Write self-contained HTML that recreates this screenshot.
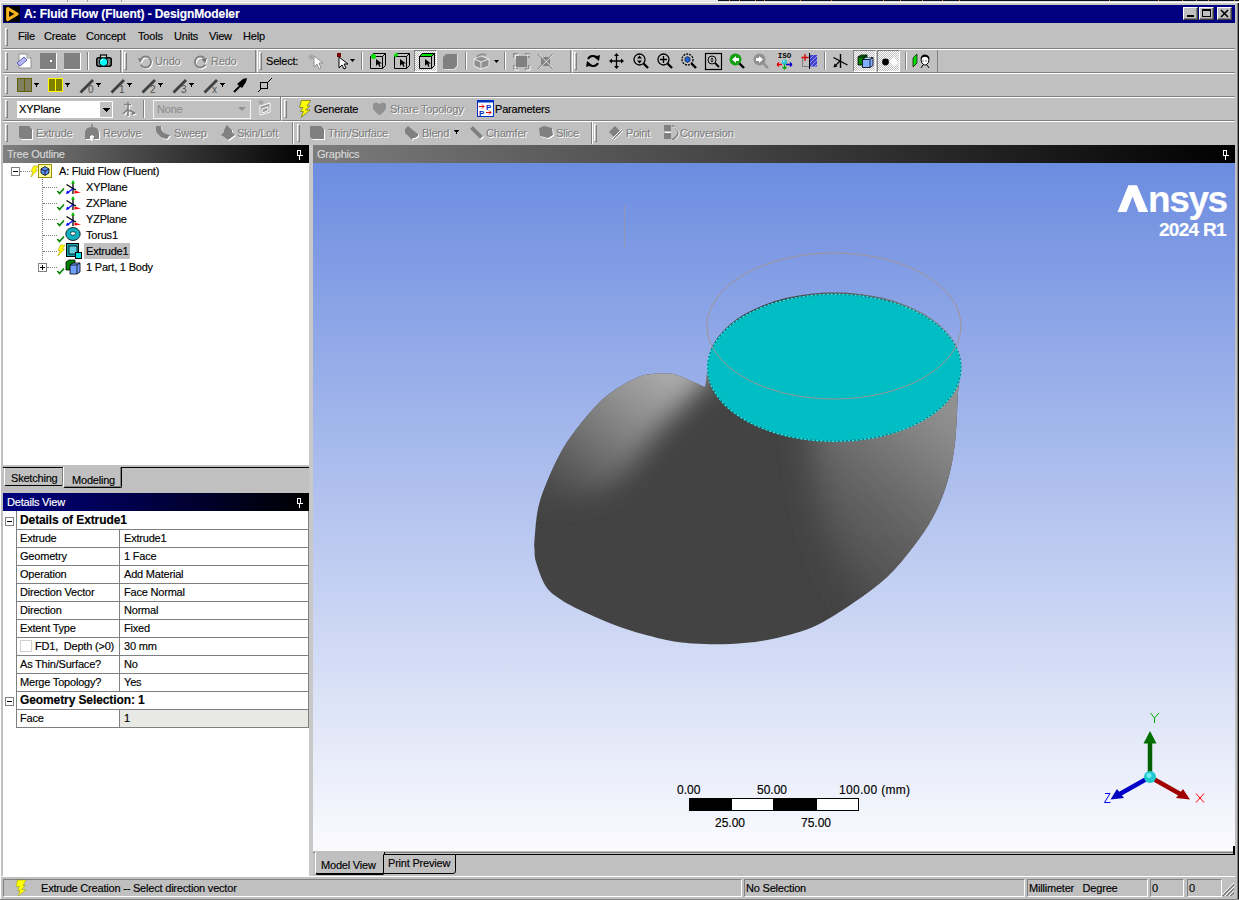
<!DOCTYPE html>
<html><head><meta charset="utf-8">
<style>
*{margin:0;padding:0;box-sizing:border-box}
html,body{width:1239px;height:900px;overflow:hidden;background:#c0c0c0}
body{position:relative;font-family:"Liberation Sans",sans-serif;font-size:11px;color:#000;letter-spacing:-0.2px;-webkit-text-stroke:0.15px currentColor}
.a{position:absolute}
.t{position:absolute;white-space:pre;line-height:13px}
.grip{position:absolute;width:3px;border-left:1px solid #fff;border-top:1px solid #fff;border-right:1px solid #808080;border-bottom:1px solid #808080}
.sep{position:absolute;width:2px;border-left:1px solid #808080;border-right:1px solid #fff}
.hl{position:absolute;height:2px;border-top:1px solid #808080;border-bottom:1px solid #fff}
.sp{position:absolute;border-top:1px solid #808080;border-left:1px solid #808080;border-right:1px solid #fff;border-bottom:1px solid #fff}
.dis{color:#808080;text-shadow:1px 1px 0 #fff}
svg{position:absolute;overflow:visible}
.tbar{position:absolute;border-left:1px solid #fff;border-right:1px solid #808080;border-bottom:1px solid #808080}
.tbar.f{border-left:none}
.tbar.nb{border-bottom:none}
.tbar.nr{border-right:none}
.pressed{background-color:#e0e0e0;background-image:repeating-conic-gradient(#fff 0 25%,#c0c0c0 0 50%);background-size:2px 2px;border-top:1px solid #808080;border-left:1px solid #808080;border-right:1px solid #fff;border-bottom:1px solid #fff}
.tb{background:#c0c0c0;border-top:1px solid #fff;border-left:1px solid #fff;border-right:1px solid #404040;border-bottom:1px solid #404040;box-shadow:inset -1px -1px 0 #808080}
</style></head><body>
<!-- top strip -->
<div class="a" style="left:0;top:0;width:1239px;height:1px;background:#ececec"></div>
<div class="a" style="left:718px;top:0;width:521px;height:1px;background:#0c1424"></div>
<div class="a" style="left:0;top:1px;width:1239px;height:1px;background:#dcdcdc"></div>
<div class="a" style="left:729px;top:0;width:1px;height:1px;background:#d09030"></div><div class="a" style="left:739px;top:0;width:1px;height:1px;background:#d09030"></div><div class="a" style="left:755px;top:0;width:1px;height:1px;background:#d09030"></div><div class="a" style="left:764px;top:0;width:1px;height:1px;background:#d09030"></div><div class="a" style="left:800px;top:0;width:1px;height:1px;background:#d09030"></div><div class="a" style="left:831px;top:0;width:1px;height:1px;background:#d09030"></div><div class="a" style="left:883px;top:0;width:1px;height:1px;background:#d09030"></div><div class="a" style="left:900px;top:0;width:1px;height:1px;background:#d09030"></div><div class="a" style="left:922px;top:0;width:1px;height:1px;background:#d09030"></div><div class="a" style="left:942px;top:0;width:1px;height:1px;background:#d09030"></div><div class="a" style="left:959px;top:0;width:1px;height:1px;background:#d09030"></div><div class="a" style="left:1109px;top:0;width:1px;height:1px;background:#d09030"></div><div class="a" style="left:1158px;top:0;width:1px;height:1px;background:#d09030"></div><div class="a" style="left:1182px;top:0;width:1px;height:1px;background:#d09030"></div><div class="a" style="left:1196px;top:0;width:1px;height:1px;background:#d09030"></div><div class="a" style="left:1208px;top:0;width:1px;height:1px;background:#d09030"></div><div class="a" style="left:1234px;top:0;width:1px;height:1px;background:#d09030"></div><div class="a" style="left:67px;top:0;width:1px;height:2px;background:#a0a0a0"></div><div class="a" style="left:87px;top:0;width:1px;height:2px;background:#a0a0a0"></div><div class="a" style="left:121px;top:0;width:1px;height:2px;background:#a0a0a0"></div>
<div class="a" style="left:0;top:2px;width:1239px;height:1px;background:#fff"></div>
<div class="a" style="left:0;top:3px;width:1239px;height:2px;background:#c8c8c4"></div>

<!-- title bar -->
<div class="a" style="left:3px;top:5px;width:1232px;height:18px;background:#000080"></div>
<div class="a" style="left:4px;top:6px;width:16px;height:16px;background:#000"></div>
<svg style="left:4px;top:6px" width="16" height="16"><path d="M3.6 2.4 L13.2 8 L3.6 13.6 Z" fill="none" stroke="#f5b21a" stroke-width="3" stroke-linejoin="round"/></svg>
<div class="t" style="left:24px;top:8px;color:#fff;font-weight:bold;font-size:12px;letter-spacing:-0.1px">A: Fluid Flow (Fluent) - DesignModeler</div>

<!-- menu -->
<div class="grip" style="left:5px;top:28px;height:18px"></div>
<div class="t" style="left:18px;top:30px">File</div>
<div class="t" style="left:44px;top:30px">Create</div>
<div class="t" style="left:86px;top:30px">Concept</div>
<div class="t" style="left:138px;top:30px">Tools</div>
<div class="t" style="left:174px;top:30px">Units</div>
<div class="t" style="left:209px;top:30px">View</div>
<div class="t" style="left:243px;top:30px">Help</div>
<div class="hl" style="left:3px;top:48px;width:1232px"></div>
<div class="hl" style="left:3px;top:72px;width:1232px"></div>
<div class="hl" style="left:3px;top:96px;width:1232px"></div>
<div class="hl" style="left:3px;top:120px;width:1232px"></div>


<!-- window borders -->
<div class="a" style="left:0;top:3px;width:1px;height:897px;background:#fff"></div>
<div class="a" style="left:1235px;top:3px;width:4px;height:897px;background:#c0c0c0"></div>
<div class="a" style="left:1237px;top:3px;width:1px;height:897px;background:#808080"></div>
<div class="a" style="left:1238px;top:3px;width:1px;height:897px;background:#101010"></div>
<!-- title buttons -->
<div class="a tb" style="left:1183px;top:7px;width:15px;height:13px"></div>
<div class="a tb" style="left:1199px;top:7px;width:15px;height:13px"></div>
<div class="a tb" style="left:1217px;top:7px;width:15px;height:13px"></div>
<div class="a" style="left:1187px;top:15px;width:7px;height:2px;background:#000"></div>
<div class="a" style="left:1202px;top:9px;width:9px;height:8px;border:1px solid #000;border-top-width:2px"></div>
<svg style="left:1217px;top:7px" width="15" height="13"><path d="M4 3 L11 10 M11 3 L4 10" stroke="#000" stroke-width="1.6"/></svg>

<!-- toolbar row 1 -->
<div class="tbar f" style="left:3px;top:50px;width:118px;height:23px"></div>
<div class="grip" style="left:5px;top:52px;height:18px"></div>
<svg style="left:16px;top:53px" width="16" height="16"><path d="M3 1 H11 L15 5 V15 H3 Z" fill="#fff" stroke="#909090"/><path d="M11 1 V5 H15" fill="#ddd" stroke="#909090"/><path d="M1 10 L8 4 L11 7 L4 13 Z" fill="#b8b8f0" stroke="#6060c0"/></svg>
<div class="a" style="left:40px;top:53px;width:17px;height:17px;background:#fff"></div>
<div class="a" style="left:40px;top:53px;width:16px;height:16px;background:#808080"></div>
<div class="a" style="left:50px;top:60px;width:2px;height:2px;background:#fff"></div>
<div class="a" style="left:64px;top:53px;width:17px;height:17px;background:#fff"></div>
<div class="a" style="left:64px;top:53px;width:16px;height:16px;background:#808080"></div>
<div class="sep" style="left:87px;top:52px;height:18px"></div>
<svg style="left:96px;top:54px" width="16" height="14"><rect x="0.75" y="3.75" width="14.5" height="8.5" rx="2" fill="#808080" stroke="#000" stroke-width="1.5"/><rect x="4.5" y="1" width="6" height="3" fill="#e0e0e0" stroke="#000" stroke-width="1.2"/><circle cx="7.5" cy="8" r="4.2" fill="#00ffff" stroke="#000" stroke-width="1"/><path d="M5 7 Q5.5 5.5 7 5.2" stroke="#fff" stroke-width="0.9" fill="none"/></svg>

<div class="tbar" style="left:122px;top:50px;width:134px;height:23px"></div>
<div class="grip" style="left:124px;top:52px;height:18px"></div>
<svg style="left:137px;top:54px" width="17" height="17"><g transform="translate(1,1)"><path d="M4.29 4.46 A5.5 5.5 0 1 1 3.74 10.75" fill="none" stroke="#fff" stroke-width="1.8"/><path d="M1 4 L6 4.5 L3 9 Z" fill="#fff"/></g><path d="M4.29 4.46 A5.5 5.5 0 1 1 3.74 10.75" fill="none" stroke="#808080" stroke-width="1.8"/><path d="M1 4 L6 4.5 L3 9 Z" fill="#808080"/></svg>
<div class="t dis" style="left:155px;top:55px">Undo</div>
<svg style="left:193px;top:54px" width="17" height="17"><g transform="translate(1,1)"><path d="M11.71 4.46 A5.5 5.5 0 1 0 12.26 10.75" fill="none" stroke="#fff" stroke-width="1.8"/><path d="M14 4 L8.5 5 L12 9.5 Z" fill="#fff"/></g><path d="M11.71 4.46 A5.5 5.5 0 1 0 12.26 10.75" fill="none" stroke="#808080" stroke-width="1.8"/><path d="M14 4 L8.5 5 L12 9.5 Z" fill="#707070"/></svg>
<div class="t dis" style="left:211px;top:55px">Redo</div>

<div class="tbar" style="left:257px;top:50px;width:314px;height:23px"></div>
<div class="grip" style="left:259px;top:52px;height:18px"></div>
<div class="t" style="left:266px;top:55px">Select:</div>
<svg style="left:308px;top:53px" width="16" height="17"><path d="M6 3 L6 14 L9 11 L11 16 L13 15 L11 10 L15 10 Z" fill="#fff" stroke="#909090"/><path d="M3 1 V7 M0 4 H6 M1 2 L5 6 M5 2 L1 6" stroke="#a0a0a0"/></svg>
<svg style="left:337px;top:53px" width="18" height="17"><rect x="0" y="0" width="4" height="4" fill="#800000"/><path d="M2 4 L2 15 L5 12 L7 16 L9 15 L7 11 L11 11 Z" fill="#fff" stroke="#000"/><path d="M13 6 H18 L15.5 9 Z" fill="#000"/></svg>
<div class="sep" style="left:361px;top:52px;height:18px"></div>
<svg style="left:370px;top:53px" width="16" height="16"><path d="M0.5 3.5 L3.5 0.5 H15.5 V12.5 L12.5 15.5 H0.5 Z M0.5 3.5 H12.5 V15.5 M12.5 3.5 L15.5 0.5" fill="#c0c0c0" stroke="#000"/><circle cx="3.5" cy="3.5" r="2.5" fill="#00e000"/><path d="M6 6 V13 L8 11 L9.5 14 L10.5 13.5 L9.5 10.5 L12 10.5 Z" fill="#000"/></svg>
<svg style="left:394px;top:53px" width="16" height="16"><path d="M0.5 3.5 L3.5 0.5 H15.5 V12.5 L12.5 15.5 H0.5 Z M0.5 3.5 H12.5 V15.5 M12.5 3.5 L15.5 0.5" fill="#c0c0c0" stroke="#000"/><path d="M0.5 3.5 L3.5 0.5" stroke="#00e000" stroke-width="2.5"/><path d="M6 6 V13 L8 11 L9.5 14 L10.5 13.5 L9.5 10.5 L12 10.5 Z" fill="#000"/></svg>
<div class="a pressed" style="left:414px;top:50px;width:23px;height:22px"></div>
<svg style="left:419px;top:53px" width="16" height="16"><path d="M0.5 3.5 L3.5 0.5 H15.5 V12.5 L12.5 15.5 H0.5 Z" fill="#c0c0c0" stroke="#000"/><path d="M0.5 3.5 L3.5 0.5 H15.5 L12.5 3.5 Z" fill="#00e000" stroke="#000"/><path d="M12.5 3.5 V15.5" stroke="#000"/><path d="M6 6 V13 L8 11 L9.5 14 L10.5 13.5 L9.5 10.5 L12 10.5 Z" fill="#000"/></svg>
<svg style="left:442px;top:53px" width="17" height="17"><path d="M1.5 4.5 L4.5 1.5 H15.5 V13.5 L12.5 16.5 H1.5 Z" fill="#fff"/><path d="M1 4 L4 1 H15 V13 L12 16 H1 Z" fill="#808080"/></svg>
<div class="sep" style="left:465px;top:52px;height:18px"></div>
<svg style="left:473px;top:53px" width="25" height="17"><path d="M1 6 L8 3 L16 6 V13 L8 16 L1 13 Z" fill="#909090" stroke="#fff" stroke-width="0.7"/><path d="M8 9 V16 M1 6 L8 9 L16 6" stroke="#fff" stroke-width="0.8" fill="none"/><path d="M4 4 A6 4 0 0 1 13 2" fill="none" stroke="#909090" stroke-width="1.8"/><path d="M21 7 H26 L23.5 10 Z" fill="#000"/></svg>
<div class="sep" style="left:504px;top:52px;height:18px"></div>
<svg style="left:513px;top:53px" width="17" height="17"><rect x="3" y="3" width="11" height="11" fill="#808080"/><path d="M1 5 V1 H5 M12 1 H16 V5 M16 12 V16 H12 M5 16 H1 V12" stroke="#808080" stroke-width="1.5" fill="none"/><path d="M2 6 V2 H6 M13 2 H17 M17 13 V17 H13 M6 17 H2 V13" stroke="#fff" fill="none"/></svg>
<svg style="left:537px;top:53px" width="17" height="17"><rect x="4" y="4" width="9" height="9" fill="#808080"/><path d="M1 1 L16 16 M16 1 L1 16" stroke="#909090" stroke-width="1.4"/><path d="M2 1 L17 16 M17 1 L2 16" stroke="#fff" stroke-width="0.6"/></svg>

<div class="tbar" style="left:572px;top:50px;width:366px;height:23px"></div>
<div class="grip" style="left:574px;top:52px;height:18px"></div>
<svg style="left:586px;top:53px" width="14" height="16"><path d="M11.5 5 A5.5 5 0 0 0 2 6" fill="none" stroke="#000" stroke-width="2"/><path d="M2.5 11 A5.5 5 0 0 0 12 10" fill="none" stroke="#000" stroke-width="2"/><path d="M8 4 L14 2 L13 8 Z M6 12 L0 14 L1 8 Z" fill="#000"/></svg>
<svg style="left:609px;top:53px" width="15" height="16"><path d="M7.5 2 V14 M1.5 8 H13.5" stroke="#000" stroke-width="1.3"/><path d="M7.5 0 L10 3 H5 Z M7.5 16 L10 13 H5 Z M0 8 L3 5.5 V10.5 Z M15 8 L12 5.5 V10.5 Z" fill="#000"/></svg>
<svg style="left:633px;top:53px" width="16" height="16"><circle cx="6.5" cy="6.5" r="5.5" fill="none" stroke="#000" stroke-width="1.3"/><path d="M10.5 10.5 L15 15" stroke="#000" stroke-width="2.4"/><path d="M6.5 2.5 L9 5.5 H4 Z M6.5 10.5 L9 7.5 H4 Z" fill="#000"/></svg>
<svg style="left:657px;top:53px" width="16" height="16"><circle cx="6.5" cy="6.5" r="5.5" fill="none" stroke="#000" stroke-width="1.3"/><path d="M10.5 10.5 L15 15" stroke="#000" stroke-width="2.4"/><path d="M6.5 3 V10 M3 6.5 H10" stroke="#000" stroke-width="1.3"/></svg>
<svg style="left:681px;top:53px" width="16" height="16"><circle cx="6.5" cy="6.5" r="5.5" fill="none" stroke="#000" stroke-width="1.3" stroke-dasharray="2 1"/><path d="M10.5 10.5 L15 15" stroke="#000" stroke-width="2.4"/><path d="M4 5 L6.5 3.5 L9 5 V8 L6.5 9.5 L4 8 Z" fill="#2060e0" stroke="#000" stroke-width="0.6"/></svg>
<svg style="left:705px;top:53px" width="17" height="17"><rect x="0.5" y="0.5" width="16" height="16" fill="none" stroke="#000" stroke-width="1.2"/><circle cx="7" cy="7" r="4" fill="none" stroke="#000"/><path d="M10 10 L14 14" stroke="#000" stroke-width="2"/><path d="M7 4.5 L8.5 6.5 H5.5 Z M7 9.5 L8.5 7.5 H5.5 Z" fill="#000"/></svg>
<svg style="left:729px;top:53px" width="16" height="16"><circle cx="6.5" cy="6.5" r="6" fill="#10a010"/><path d="M10.5 10.5 L15 15" stroke="#000" stroke-width="2.4"/><path d="M3 6.5 L7 3 V5 H10 V8 H7 V10 Z" fill="#fff"/></svg>
<svg style="left:753px;top:53px" width="16" height="16"><circle cx="6.5" cy="6.5" r="6" fill="#909090"/><path d="M10.5 10.5 L15 15" stroke="#909090" stroke-width="2.4"/><path d="M10 6.5 L6 3 V5 H3 V8 H6 V10 Z" fill="#fff"/></svg>
<svg style="left:776px;top:53px" width="17" height="17"><text x="8.5" y="5.3" font-family="Liberation Mono" font-size="7.5" font-weight="bold" text-anchor="middle" fill="#000" letter-spacing="0">ISO</text><path d="M1 11.5 H6 M10 11.5 H16" stroke="#e00000" stroke-width="1.3"/><path d="M10 11.5 H16" stroke="#0000e0" stroke-width="1.3"/><path d="M1 11.5 L3 9.5 M1 11.5 L3 13.5" stroke="#e00000" stroke-width="1.1"/><path d="M16 11.5 L14 9.5 M16 11.5 L14 13.5" stroke="#0000e0" stroke-width="1.1"/><path d="M8.5 10 V16 M6.5 14 L8.5 16 L10.5 14" stroke="#00a000" stroke-width="1.2" fill="none"/><circle cx="8.5" cy="9" r="2.6" fill="#20c0d0"/><circle cx="7.8" cy="8.3" r="1" fill="#a0f0ff"/></svg>
<svg style="left:801px;top:53px" width="17" height="17"><rect x="8" y="2" width="8" height="11.5" fill="#4040d0"/><path d="M8 7 L13 2 M8 11 L16 3 M10 13 L16 7 M14 13 L16 11" stroke="#a0a0ff" stroke-width="0.9"/><rect x="1.5" y="4.5" width="7" height="9" fill="none" stroke="#808080"/><path d="M8.5 0 V16" stroke="#000"/><path d="M4 1 V8 M0.5 4.5 H7.5" stroke="#d00000" stroke-width="1.3"/></svg>
<div class="sep" style="left:824px;top:52px;height:18px"></div>
<svg style="left:832px;top:53px" width="17" height="16"><path d="M8.5 1 V15" stroke="#000" stroke-width="1.4"/><path d="M1.5 4.5 L15.5 12" stroke="#000" stroke-width="1.4"/><path d="M8 8 L3 13" stroke="#000" stroke-width="1.2"/><path d="M1.5 14.5 L2.5 10.5 L5.5 13.5 Z" fill="#000"/></svg>
<div class="a pressed" style="left:853px;top:50px;width:23px;height:22px"></div>
<svg style="left:857px;top:54px" width="17" height="15"><path d="M1 3 L4 1 H10 V9 L7 11 H1 Z" fill="#008000" stroke="#000" stroke-width="0.8"/><path d="M1 3 H7 V11 M7 3 L10 1" stroke="#000" stroke-width="0.8" fill="none"/><path d="M5.5 5.5 L8.5 3.5 H16 V11.5 L13 13.5 H5.5 Z" fill="#80b0ff" stroke="#000" stroke-width="0.8"/><path d="M5.5 5.5 H13 V13.5 M13 5.5 L16 3.5" stroke="#000" stroke-width="0.8" fill="none"/><path d="M7 5 L10 3.5 H14.5 L12 5 Z" fill="#c0d8ff"/></svg>
<div class="a pressed" style="left:877px;top:50px;width:23px;height:22px"></div>
<svg style="left:881px;top:54px" width="18" height="15"><circle cx="4.5" cy="8" r="3.4" fill="#000"/><path d="M13 3.5 L17.5 8 L13 12.5 L8.5 8 Z" fill="#fff"/></svg>
<div class="sep" style="left:905px;top:52px;height:18px"></div>
<svg style="left:912px;top:53px" width="19" height="16"><path d="M1 5 L5 1 V10 L1 14 Z" fill="#00e000" stroke="#000" stroke-width="0.7"/><path d="M9 7 Q9 3 13 2.5 Q17 3 17 7 Q17 10 14 12 H12 Q9 10 9 7 Z" fill="#fff" stroke="#000"/><path d="M8.5 6 Q9 1.5 13 1.5 Q17.5 2 17.5 6 L16 5 Q14 3 11 4 Z" fill="#000"/><path d="M10.5 8 H11.5 M13.5 8 H14.5" stroke="#000"/><path d="M9 15 L11 12 M17 15 L15 12" stroke="#000"/></svg>

<!-- toolbar row 2 -->
<div class="grip" style="left:5px;top:76px;height:18px"></div>
<svg style="left:17px;top:78px" width="16" height="14"><rect x="0.5" y="0.5" width="14" height="13" fill="#808060" stroke="#606000"/><path d="M7.5 0.5 V13.5" stroke="#606000"/></svg>
<svg style="left:34px;top:83px" width="6" height="5"><path d="M0 0 H5 V1 H4 V2 H3 V4 H2 V2 H1 V1 H0 Z" fill="#000"/></svg>
<svg style="left:48px;top:78px" width="16" height="14"><rect x="0.5" y="0.5" width="14" height="13" fill="#808000" stroke="#ffff00"/><path d="M7.5 0.5 V13.5" stroke="#ffff00"/></svg>
<svg style="left:65px;top:83px" width="6" height="5"><path d="M0 0 H5 V1 H4 V2 H3 V4 H2 V2 H1 V1 H0 Z" fill="#000"/></svg>
<svg style="left:79px;top:78px" width="16" height="16"><path d="M1.5 14.5 L14 2" stroke="#404040" stroke-width="2.8"/><text x="9" y="15" font-family="Liberation Sans" font-size="10" fill="#505050" letter-spacing="0">0</text></svg>
<svg style="left:96px;top:83px" width="6" height="5"><path d="M0 0 H5 V1 H4 V2 H3 V4 H2 V2 H1 V1 H0 Z" fill="#000"/></svg>
<svg style="left:110px;top:78px" width="16" height="16"><path d="M1.5 14.5 L14 2" stroke="#404040" stroke-width="2.8"/><text x="9" y="15" font-family="Liberation Sans" font-size="10" fill="#505050" letter-spacing="0">1</text></svg>
<svg style="left:127px;top:83px" width="6" height="5"><path d="M0 0 H5 V1 H4 V2 H3 V4 H2 V2 H1 V1 H0 Z" fill="#000"/></svg>
<svg style="left:141px;top:78px" width="16" height="16"><path d="M1.5 14.5 L14 2" stroke="#404040" stroke-width="2.8"/><text x="9" y="15" font-family="Liberation Sans" font-size="10" fill="#505050" letter-spacing="0">2</text></svg>
<svg style="left:158px;top:83px" width="6" height="5"><path d="M0 0 H5 V1 H4 V2 H3 V4 H2 V2 H1 V1 H0 Z" fill="#000"/></svg>
<svg style="left:172px;top:78px" width="16" height="16"><path d="M1.5 14.5 L14 2" stroke="#404040" stroke-width="2.8"/><text x="9" y="15" font-family="Liberation Sans" font-size="10" fill="#505050" letter-spacing="0">3</text></svg>
<svg style="left:189px;top:83px" width="6" height="5"><path d="M0 0 H5 V1 H4 V2 H3 V4 H2 V2 H1 V1 H0 Z" fill="#000"/></svg>
<svg style="left:203px;top:78px" width="16" height="16"><path d="M1.5 14.5 L14 2" stroke="#404040" stroke-width="2.8"/><text x="9" y="15" font-family="Liberation Sans" font-size="10" fill="#505050" letter-spacing="0">x</text></svg>
<svg style="left:220px;top:83px" width="6" height="5"><path d="M0 0 H5 V1 H4 V2 H3 V4 H2 V2 H1 V1 H0 Z" fill="#000"/></svg>
<svg style="left:233px;top:77px" width="16" height="16"><path d="M1 15 L8 8" stroke="#000" stroke-width="2"/><path d="M4 7 L10 2 L14 1 L13 5 L9 11 Z" fill="#000"/></svg>
<svg style="left:258px;top:77px" width="15" height="15"><rect x="2.5" y="5.5" width="7" height="6" fill="none" stroke="#000"/><path d="M0 15 L3 12 M9 6 L14 1" stroke="#000"/></svg>
<div class="a" style="left:280px;top:97px;width:1px;height:23px;background:#808080"></div>

<!-- toolbar row 3 -->
<div class="tbar f" style="left:3px;top:98px;width:278px;height:23px"></div>
<div class="grip" style="left:5px;top:100px;height:18px"></div>
<div class="a" style="left:17px;top:101px;width:96px;height:17px;background:#fff"></div>
<div class="a" style="left:100px;top:102px;width:12px;height:15px;background:#c0c0c0"></div>
<svg style="left:103px;top:108px" width="8" height="5"><path d="M0 0 H7 V1 H6 V2 H5 V3 H4 V4 H3 V3 H2 V2 H1 V1 H0 Z" fill="#000"/></svg>
<div class="t" style="left:19px;top:103px">XYPlane</div>
<svg style="left:121px;top:101px" width="17" height="17"><g transform="translate(1,1)"><path d="M3 3.5 H10 M7 1 V15 M7 8 L2 13 M7 9 L14 12" stroke="#fff" stroke-width="1.6" fill="none"/><path d="M11 10 L15 12.5 L11 14 Z" fill="#fff"/></g><path d="M3 3.5 H10 M7 1 V15 M7 8 L2 13 M7 9 L14 12" stroke="#808080" stroke-width="1.6" fill="none"/><path d="M11 10 L15 12.5 L11 14 Z" fill="#808080"/></svg>
<div class="sep" style="left:143px;top:100px;height:18px"></div>
<div class="a" style="left:153px;top:100px;width:98px;height:19px;border:1px solid #f4f4f4"></div>
<div class="t" style="left:157px;top:103px;color:#909090">None</div>
<svg style="left:238px;top:107px" width="9" height="5"><path d="M0 0 H8 L4 4 Z" fill="#909090"/></svg>
<svg style="left:257px;top:100px" width="16" height="17"><path d="M3 6 L13 3 V12 L3 15 Z" fill="#a0a0a0" stroke="#fff"/><path d="M5 9 L11 7 V11 L5 13 Z" fill="none" stroke="#fff"/><path d="M4 0 V5 M1.5 2.5 H6.5 M2 1 L6 4 M6 1 L2 4" stroke="#a0a0a0"/></svg>
<div class="tbar nr" style="left:281px;top:98px;width:954px;height:23px"></div>
<div class="grip" style="left:284px;top:100px;height:18px"></div>
<svg style="left:298px;top:100px" width="14" height="18"><path d="M3.5 0.5 H12.5 L9 6 H12 L7.5 10 H12 L3 17.5 L5.5 11.5 H2.5 L5 7.5 H1.5 Z" fill="#ffff00" stroke="#606000" stroke-width="0.6"/></svg>
<div class="t" style="left:314px;top:103px">Generate</div>
<svg style="left:372px;top:101px" width="15" height="15"><path d="M1 3 Q4 0 7.5 3 Q11 0 14 3 V8 Q10 13 7.5 14 Q5 13 1 8 Z" fill="#909090"/></svg>
<div class="t dis" style="left:390px;top:103px">Share Topology</div>
<svg style="left:477px;top:100px" width="17" height="17"><rect x="0.5" y="0.5" width="16" height="16" fill="#fff" stroke="#0030c0"/><rect x="0" y="0" width="17" height="2.5" fill="#0030c0"/><text x="9" y="9.5" font-family="Liberation Sans" font-size="8" font-weight="bold" fill="#0030c0" letter-spacing="0" style="-webkit-text-stroke:0">P</text><text x="2" y="15.5" font-family="Liberation Sans" font-size="8" font-weight="bold" fill="#0030c0" letter-spacing="0" style="-webkit-text-stroke:0">P</text><path d="M2 6.5 H7 M5 4.5 L7 6.5 L5 8.5 M9 12.5 H14 M12 10.5 L14 12.5 L12 14.5" stroke="#e00000" stroke-width="1" fill="none"/></svg>
<div class="t" style="left:495px;top:103px">Parameters</div>

<!-- toolbar row 4 -->
<div class="tbar f nb" style="left:3px;top:122px;width:290px;height:22px"></div>
<div class="grip" style="left:5px;top:124px;height:18px"></div>
<svg style="left:18px;top:124px" width="17" height="17"><path d="M1 2 H11 L14 5 V15 H3 L1 13 Z" fill="#fff" transform="translate(1,1)"/><path d="M1 2 H11 L14 5 V15 H3 L1 13 Z" fill="#808080"/></svg>
<div class="t dis" style="left:36px;top:127px">Extrude</div>
<svg style="left:84px;top:124px" width="17" height="17"><path d="M1 15 V9 Q1 3 8 3 Q15 3 15 9 V15 H10 V12 H6 V15 Z" fill="#fff" transform="translate(1,1)"/><path d="M1 15 V9 Q1 3 8 3 Q15 3 15 9 V15 H10 V12 H6 V15 Z" fill="#808080"/><path d="M8 0 V3" stroke="#808080" stroke-width="1.5"/><path d="M8 11 V17" stroke="#fff" stroke-width="1.5"/></svg>
<div class="t dis" style="left:103px;top:127px">Revolve</div>
<svg style="left:155px;top:124px" width="17" height="17"><path d="M1 2 H6 Q6 8 11 10 L15 11 L12 15 Q4 14 1 7 Z" fill="#fff" transform="translate(1,1)"/><path d="M1 2 H6 Q6 8 11 10 L15 11 L12 15 Q4 14 1 7 Z" fill="#808080"/></svg>
<div class="t dis" style="left:174px;top:127px">Sweep</div>
<svg style="left:220px;top:124px" width="17" height="17"><path d="M7 1 L12 6 V8 L15 11 L8 16 L1 11 L4 8 V6 Z" fill="#fff" transform="translate(1,1)"/><path d="M7 1 L12 6 V8 L15 11 L8 16 L1 11 L4 8 V6 Z" fill="#808080"/></svg>
<div class="t dis" style="left:237px;top:127px">Skin/Loft</div>
<div class="tbar nb" style="left:293px;top:122px;width:299px;height:22px"></div>
<div class="grip" style="left:297px;top:124px;height:18px"></div>
<svg style="left:309px;top:124px" width="17" height="17"><path d="M1 2 H12 L15 5 V15 H3 L1 13 Z" fill="#fff" transform="translate(1,1)"/><path d="M1 2 H12 L15 5 V15 H3 L1 13 Z" fill="#808080"/></svg>
<div class="t dis" style="left:328px;top:127px">Thin/Surface</div>
<svg style="left:404px;top:124px" width="17" height="17"><path d="M1 5 L4 2 L14 10 V12 L11 14 L9 14 L8 16 L6 14 L1 9 Z" fill="#fff" transform="translate(1,1)"/><path d="M1 5 L4 2 L14 10 V12 L11 14 L9 14 L8 16 L6 14 L1 9 Z" fill="#808080"/></svg>
<div class="t dis" style="left:422px;top:127px">Blend</div>
<svg style="left:454px;top:130px" width="6" height="5"><path d="M0 0 H5 V1 H4 V2 H3 V4 H2 V2 H1 V1 H0 Z" fill="#000"/></svg>
<svg style="left:469px;top:124px" width="17" height="17"><path d="M1 5 L4 2 L14 12 L11 15 Z" fill="#fff" transform="translate(1,1)"/><path d="M1 5 L4 2 L14 12 L11 15 Z" fill="#808080"/></svg>
<div class="t dis" style="left:486px;top:127px">Chamfer</div>
<svg style="left:538px;top:124px" width="17" height="17"><path d="M1 4 L6 2 L14 4 L15 11 L10 14 L2 12 Z" fill="#fff" transform="translate(1,1)"/><path d="M1 4 L6 2 L14 4 L15 11 L10 14 L2 12 Z" fill="#808080"/></svg>
<div class="t dis" style="left:556px;top:127px">Slice</div>
<div class="tbar nb nr" style="left:592px;top:122px;width:643px;height:22px"></div>
<div class="grip" style="left:594px;top:124px;height:18px"></div>
<svg style="left:608px;top:124px" width="17" height="17"><path d="M1 8 L7 2 L13 8 L7 14 Z" fill="#808080"/><path d="M4 15 L14 5 M6 16 L15 7" stroke="#fff" stroke-width="1"/><path d="M5 15.5 L14.5 6" stroke="#808080" stroke-width="1"/></svg>
<div class="t dis" style="left:626px;top:127px">Point</div>
<svg style="left:663px;top:124px" width="16" height="17"><rect x="1" y="1" width="7" height="6" fill="#808080"/><rect x="1" y="9" width="7" height="6" fill="#808080"/><rect x="2" y="8" width="6" height="1" fill="#fff"/><path d="M9 2 H11 L15 7 V10 L11 15 H9" fill="none" stroke="#808080" stroke-width="1.5"/><path d="M10 3 H12 L16 8 V11 L12 16" fill="none" stroke="#fff" stroke-width="0.8"/></svg>
<div class="t dis" style="left:680px;top:127px">Conversion</div>

<!-- TREE OUTLINE -->
<div class="a" style="left:3px;top:145px;width:306px;height:18px;background:linear-gradient(to right,#808080,#000)"></div>
<div class="t" style="left:7px;top:148px;color:#d8d8d8">Tree Outline</div>
<svg style="left:297px;top:150px" width="6" height="10"><path d="M0.5 0.5 H3.5 V5.5 H0.5 Z M3.5 5.5 H6 M2.5 6 V9.5" fill="none" stroke="#fff" shape-rendering="crispEdges"/></svg>
<div class="a" style="left:3px;top:163px;width:306px;height:302px;background:#fff"></div>
<div class="a" style="left:11px;top:167px;width:9px;height:9px;border:1px solid #808080;background:#fff"></div>
<div class="a" style="left:13px;top:171px;width:5px;height:1px;background:#000"></div>
<div class="a" style="left:20px;top:171px;width:10px;border-top:1px dotted #808080"></div>
<div class="a" style="left:42px;top:179px;height:81px;border-left:1px dotted #808080"></div>
<div class="t" style="left:59px;top:165px">A: Fluid Flow (Fluent)</div>
<div class="a" style="left:43px;top:187px;width:14px;border-top:1px dotted #808080"></div>
<div class="t" style="left:86px;top:181px">XYPlane</div>
<div class="a" style="left:43px;top:203px;width:14px;border-top:1px dotted #808080"></div>
<div class="t" style="left:86px;top:197px">ZXPlane</div>
<div class="a" style="left:43px;top:219px;width:14px;border-top:1px dotted #808080"></div>
<div class="t" style="left:86px;top:213px">YZPlane</div>
<div class="a" style="left:43px;top:235px;width:14px;border-top:1px dotted #808080"></div>
<div class="t" style="left:86px;top:229px">Torus1</div>
<div class="a" style="left:43px;top:251px;width:14px;border-top:1px dotted #808080"></div>
<div class="a" style="left:84px;top:243px;width:46px;height:16px;background:#c0c0c0"></div>
<div class="t" style="left:86px;top:245px">Extrude1</div>
<div class="a" style="left:43px;top:267px;width:14px;border-top:1px dotted #808080"></div>
<div class="t" style="left:86px;top:261px">1 Part, 1 Body</div>
<svg style="left:30px;top:166px" width="8" height="11"><path d="M3.5 0 H8 L5.5 4 H7.5 L1 11 L3 5.5 H1 Z" fill="#ffff00" stroke="#a09000" stroke-width="0.5"/></svg>
<svg style="left:38px;top:163px" width="15" height="15"><rect x="0.5" y="1.5" width="13" height="13" fill="#ffffa0" stroke="#a09000"/><path d="M3 6 L7 3.5 L11 6 V10 L7 12.5 L3 10 Z" fill="#6090ff" stroke="#000" stroke-width="0.8"/><path d="M7 8 V12 M3 6 L7 8 L11 6" stroke="#000" stroke-width="0.8" fill="none"/></svg>
<svg style="left:57px;top:188px" width="8" height="7"><path d="M0.5 3 L2.5 5.5 L7 0.5" fill="none" stroke="#008000" stroke-width="1.6"/></svg>
<svg style="left:66px;top:180px" width="16" height="16"><path d="M7 2.5 V14" stroke="#000" stroke-width="1.3"/><path d="M0.5 4.5 L7 8.5 L10 10" stroke="#000" stroke-width="1.3"/><path d="M7 8.5 L2.5 12" stroke="#0000ff" stroke-width="1.2"/><path d="M0 14 L1 10.5 L3.8 13 Z" fill="#0000ff"/><path d="M8.5 10.5 L15 12.5 L8.5 13.5 Z" fill="#ff0000"/><path d="M5 3.5 L7 0 L9 3.5 Z" fill="#00c000"/></svg>
<svg style="left:57px;top:204px" width="8" height="7"><path d="M0.5 3 L2.5 5.5 L7 0.5" fill="none" stroke="#008000" stroke-width="1.6"/></svg>
<svg style="left:66px;top:196px" width="16" height="16"><path d="M7 2.5 V14" stroke="#000" stroke-width="1.3"/><path d="M0.5 4.5 L7 8.5 L10 10" stroke="#000" stroke-width="1.3"/><path d="M7 8.5 L2.5 12" stroke="#0000ff" stroke-width="1.2"/><path d="M0 14 L1 10.5 L3.8 13 Z" fill="#0000ff"/><path d="M8.5 10.5 L15 12.5 L8.5 13.5 Z" fill="#ff0000"/><path d="M5 3.5 L7 0 L9 3.5 Z" fill="#00c000"/></svg>
<svg style="left:57px;top:220px" width="8" height="7"><path d="M0.5 3 L2.5 5.5 L7 0.5" fill="none" stroke="#008000" stroke-width="1.6"/></svg>
<svg style="left:66px;top:212px" width="16" height="16"><path d="M7 2.5 V14" stroke="#000" stroke-width="1.3"/><path d="M0.5 4.5 L7 8.5 L10 10" stroke="#000" stroke-width="1.3"/><path d="M7 8.5 L2.5 12" stroke="#0000ff" stroke-width="1.2"/><path d="M0 14 L1 10.5 L3.8 13 Z" fill="#0000ff"/><path d="M8.5 10.5 L15 12.5 L8.5 13.5 Z" fill="#ff0000"/><path d="M5 3.5 L7 0 L9 3.5 Z" fill="#00c000"/></svg>
<svg style="left:57px;top:236px" width="8" height="7"><path d="M0.5 3 L2.5 5.5 L7 0.5" fill="none" stroke="#008000" stroke-width="1.6"/></svg>
<svg style="left:65px;top:227px" width="16" height="14"><ellipse cx="8" cy="7" rx="7.2" ry="6.5" fill="#10b0c0" stroke="#000" stroke-width="0.8"/><ellipse cx="8" cy="6.5" rx="2.5" ry="1.8" fill="#fff" stroke="#000" stroke-width="0.6"/></svg>
<svg style="left:57px;top:245px" width="8" height="11"><path d="M3.5 0 H8 L5.5 4 H7.5 L1 11 L3 5.5 H1 Z" fill="#ffff00" stroke="#a09000" stroke-width="0.5"/></svg>
<svg style="left:66px;top:243px" width="16" height="16"><rect x="0.5" y="0.5" width="12" height="13" fill="#10a0b0" stroke="#000"/><rect x="3" y="3" width="8" height="8" fill="#60d0e0" stroke="#000" stroke-width="0.8"/><rect x="9.5" y="9.5" width="6" height="6" fill="#00e0e0" stroke="#000"/></svg>
<div class="a" style="left:38px;top:263px;width:9px;height:9px;border:1px solid #808080;background:#fff"></div><div class="a" style="left:40px;top:267px;width:5px;height:1px;background:#000"></div><div class="a" style="left:42px;top:265px;width:1px;height:5px;background:#000"></div>
<div class="a" style="left:47px;top:267px;width:10px;border-top:1px dotted #808080"></div>
<svg style="left:57px;top:268px" width="8" height="7"><path d="M0.5 3 L2.5 5.5 L7 0.5" fill="none" stroke="#008000" stroke-width="1.6"/></svg>
<svg style="left:65px;top:259px" width="16" height="16"><path d="M1 3 L4 1 H10 V9 L7 11 H1 Z" fill="#008000" stroke="#000" stroke-width="0.8"/><path d="M5 6 L8 4 H15 V13 L12 15 H5 Z" fill="#70a0ff" stroke="#000" stroke-width="0.8"/><path d="M5 6 H12 V15 M12 6 L15 4" stroke="#000" stroke-width="0.8" fill="none"/></svg>

<!-- tabs -->
<div class="a" style="left:3px;top:465px;width:306px;height:28px;background:#c0c0c0"></div>
<div class="a" style="left:3px;top:467px;width:60px;height:1px;background:#000"></div><div class="a" style="left:121px;top:467px;width:188px;height:1px;background:#000"></div>

<div class="a" style="left:4px;top:468px;width:59px;height:18px;background:#c0c0c0;border-left:1px solid #fff;border-bottom:1px solid #000;border-right:1px solid #808080;border-radius:0 0 2px 2px"></div>
<div class="t" style="left:11px;top:472px">Sketching</div>
<div class="a" style="left:63px;top:467px;width:59px;height:21px;background:#c0c0c0;border-left:1px solid #fff;border-bottom:1px solid #000;border-right:1px solid #000;border-radius:0 0 2px 2px;box-shadow:inset -1px -1px 0 #808080"></div>
<div class="t" style="left:72px;top:474px">Modeling</div>

<!-- DETAILS VIEW -->
<div class="a" style="left:3px;top:493px;width:306px;height:18px;background:linear-gradient(to right,#000080,#000)"></div>
<div class="t" style="left:7px;top:496px;color:#fff">Details View</div>
<svg style="left:297px;top:498px" width="6" height="10"><path d="M0.5 0.5 H3.5 V5.5 H0.5 Z M3.5 5.5 H6 M2.5 6 V9.5" fill="none" stroke="#fff" shape-rendering="crispEdges"/></svg>
<div class="a" style="left:3px;top:511px;width:306px;height:366px;background:#fff"></div>
<div class="a" style="left:120px;top:709px;width:188px;height:18px;background:#e8e8e4"></div>
<div class="a" style="left:16px;top:511px;width:1px;height:216px;background:#808080"></div>
<div class="a" style="left:308px;top:511px;width:1px;height:216px;background:#808080"></div>
<div class="a" style="left:16px;top:529px;width:293px;height:1px;background:#808080"></div>
<div class="a" style="left:5px;top:517px;width:9px;height:9px;border:1px solid #808080;background:#fff"></div><div class="a" style="left:7px;top:521px;width:5px;height:1px;background:#000"></div>
<div class="t" style="left:20px;top:514px;font-weight:bold;font-size:12px;letter-spacing:-0.1px">Details of Extrude1</div>
<div class="a" style="left:16px;top:547px;width:293px;height:1px;background:#808080"></div>
<div class="a" style="left:119px;top:529px;width:1px;height:18px;background:#808080"></div>
<div class="t" style="left:20px;top:532px">Extrude</div>
<div class="t" style="left:124px;top:532px">Extrude1</div>
<div class="a" style="left:16px;top:565px;width:293px;height:1px;background:#808080"></div>
<div class="a" style="left:119px;top:547px;width:1px;height:18px;background:#808080"></div>
<div class="t" style="left:20px;top:550px">Geometry</div>
<div class="t" style="left:124px;top:550px">1 Face</div>
<div class="a" style="left:16px;top:583px;width:293px;height:1px;background:#808080"></div>
<div class="a" style="left:119px;top:565px;width:1px;height:18px;background:#808080"></div>
<div class="t" style="left:20px;top:568px">Operation</div>
<div class="t" style="left:124px;top:568px">Add Material</div>
<div class="a" style="left:16px;top:601px;width:293px;height:1px;background:#808080"></div>
<div class="a" style="left:119px;top:583px;width:1px;height:18px;background:#808080"></div>
<div class="t" style="left:20px;top:586px">Direction Vector</div>
<div class="t" style="left:124px;top:586px">Face Normal</div>
<div class="a" style="left:16px;top:619px;width:293px;height:1px;background:#808080"></div>
<div class="a" style="left:119px;top:601px;width:1px;height:18px;background:#808080"></div>
<div class="t" style="left:20px;top:604px">Direction</div>
<div class="t" style="left:124px;top:604px">Normal</div>
<div class="a" style="left:16px;top:637px;width:293px;height:1px;background:#808080"></div>
<div class="a" style="left:119px;top:619px;width:1px;height:18px;background:#808080"></div>
<div class="t" style="left:20px;top:622px">Extent Type</div>
<div class="t" style="left:124px;top:622px">Fixed</div>
<div class="a" style="left:16px;top:655px;width:293px;height:1px;background:#808080"></div>
<div class="a" style="left:119px;top:637px;width:1px;height:18px;background:#808080"></div>
<div class="a" style="left:20px;top:640px;width:12px;height:12px;border:1px solid #d0d0d0;background:#fff"></div>
<div class="t" style="left:35px;top:640px">FD1,  Depth (&gt;0)</div>
<div class="t" style="left:124px;top:640px">30 mm</div>
<div class="a" style="left:16px;top:673px;width:293px;height:1px;background:#808080"></div>
<div class="a" style="left:119px;top:655px;width:1px;height:18px;background:#808080"></div>
<div class="t" style="left:20px;top:658px">As Thin/Surface?</div>
<div class="t" style="left:124px;top:658px">No</div>
<div class="a" style="left:16px;top:691px;width:293px;height:1px;background:#808080"></div>
<div class="a" style="left:119px;top:673px;width:1px;height:18px;background:#808080"></div>
<div class="t" style="left:20px;top:676px">Merge Topology?</div>
<div class="t" style="left:124px;top:676px">Yes</div>
<div class="a" style="left:16px;top:709px;width:293px;height:1px;background:#808080"></div>
<div class="a" style="left:5px;top:697px;width:9px;height:9px;border:1px solid #808080;background:#fff"></div><div class="a" style="left:7px;top:701px;width:5px;height:1px;background:#000"></div>
<div class="t" style="left:20px;top:694px;font-weight:bold;font-size:12px;letter-spacing:-0.1px">Geometry Selection: 1</div>
<div class="a" style="left:16px;top:727px;width:293px;height:1px;background:#808080"></div>
<div class="a" style="left:119px;top:709px;width:1px;height:18px;background:#808080"></div>
<div class="t" style="left:20px;top:712px">Face</div>
<div class="t" style="left:124px;top:712px">1</div>

<div class="a" style="left:309px;top:145px;width:4px;height:732px;background:#c8c8c8"></div>

<!-- GRAPHICS -->
<div class="a" style="left:313px;top:145px;width:922px;height:18px;background:linear-gradient(to right,#7c7c7c,#000)"></div>
<div class="t" style="left:317px;top:148px;color:#d8d8d8">Graphics</div>
<svg style="left:1223px;top:150px" width="6" height="10"><path d="M0.5 0.5 H3.5 V5.5 H0.5 Z M3.5 5.5 H6 M2.5 6 V9.5" fill="none" stroke="#fff" shape-rendering="crispEdges"/></svg>
<div class="a" style="left:313px;top:163px;width:922px;height:688px;background:linear-gradient(to bottom,#6c8ce0 0%,#fbfbfe 100%)"></div>
<div class="a" style="left:313px;top:851px;width:922px;height:26px;background:#c0c0c0"></div>
<div class="a" style="left:313px;top:852px;width:921px;height:1px;background:#808080"></div>
<div class="a" style="left:384px;top:854px;width:850px;height:1px;background:#000"></div>
<div class="a" style="left:1233px;top:846px;width:2px;height:9px;background:#000"></div>
<div class="a" style="left:315px;top:852px;width:70px;height:23px;background:#c0c0c0;border-left:1px solid #fff;border-bottom:2px solid #000;border-right:1px solid #000;border-radius:0 0 3px 3px"></div>
<div class="t" style="left:321px;top:859px">Model View</div>
<div class="a" style="left:383px;top:854px;width:73px;height:20px;background:#c0c0c0;border:1px solid #000;border-radius:0 0 3px 0"></div>
<div class="t" style="left:388px;top:857px">Print Preview</div>


<!-- 3D model -->
<svg style="left:313px;top:163px" width="921" height="688" viewBox="313 163 921 688">
<defs>
<clipPath id="bc"><path d="M707.6 366 L706.5 378 L705 387 C702.2 385.8 693.5 381.7 688 379.5 C682.5 377.3 677.7 374.8 672 373.8 C666.3 372.9 660.0 373.1 654 373.8 C648.0 374.5 643.5 374.6 636 378 C628.5 381.4 617.2 387.7 609 394 C600.8 400.3 594.5 407.2 587 416 C579.5 424.8 570.7 436.0 564 447 C557.3 458.0 551.3 471.7 547 482 C542.7 492.3 540.1 499.3 538 509 C535.9 518.7 535.1 533.3 534.5 540 C533.9 546.7 534.2 545.3 534.5 549 C534.8 552.7 534.2 556.0 536 562 C537.8 568.0 541.5 579.2 545 585 C548.5 590.8 551.2 592.8 557 597 C562.8 601.2 569.5 605.0 580 610 C590.5 615.0 606.3 622.2 620 627 C633.7 631.8 649.8 636.2 662 639 C674.2 641.8 681.7 642.7 693 643.5 C704.3 644.3 717.7 644.6 730 644 C742.3 643.4 753.2 642.8 767 640 C780.8 637.2 798.7 633.2 813 627 C827.3 620.8 840.7 611.3 853 603 C865.3 594.7 877.0 586.3 887 577 C897.0 567.7 905.3 557.0 913 547 C920.7 537.0 927.3 527.7 933 517 C938.7 506.3 943.3 495.3 947 483 C950.7 470.7 953.2 458.0 955 443 C956.8 428.0 957.2 404.0 958 393 C958.8 382.0 959.5 381.5 960 377 C960.5 372.5 960.8 367.8 961 366 A126.7 73.5 0 0 0 707.6 366 Z"/></clipPath>
<filter id="bl1" x="-50%" y="-50%" width="200%" height="200%"><feGaussianBlur stdDeviation="13"/></filter>
<filter id="bl2" x="-50%" y="-50%" width="200%" height="200%"><feGaussianBlur stdDeviation="16"/></filter>
<filter id="bl3" x="-50%" y="-50%" width="200%" height="200%"><feGaussianBlur stdDeviation="5"/></filter>
<linearGradient id="lg1" gradientUnits="userSpaceOnUse" x1="672" y1="372" x2="565" y2="500"><stop offset="0" stop-color="#adadad"/><stop offset="0.35" stop-color="#8e8e8e"/><stop offset="1" stop-color="#4a4a4a"/></linearGradient>
<linearGradient id="lg2" gradientUnits="userSpaceOnUse" x1="955" y1="420" x2="815" y2="590"><stop offset="0" stop-color="#919191"/><stop offset="0.45" stop-color="#686868"/><stop offset="1" stop-color="#444"/></linearGradient>
</defs>
<line x1="624.5" y1="205" x2="624.5" y2="247" stroke="#9098b0" stroke-width="1"/>
<path d="M707.6 366 L706.5 378 L705 387 C702.2 385.8 693.5 381.7 688 379.5 C682.5 377.3 677.7 374.8 672 373.8 C666.3 372.9 660.0 373.1 654 373.8 C648.0 374.5 643.5 374.6 636 378 C628.5 381.4 617.2 387.7 609 394 C600.8 400.3 594.5 407.2 587 416 C579.5 424.8 570.7 436.0 564 447 C557.3 458.0 551.3 471.7 547 482 C542.7 492.3 540.1 499.3 538 509 C535.9 518.7 535.1 533.3 534.5 540 C533.9 546.7 534.2 545.3 534.5 549 C534.8 552.7 534.2 556.0 536 562 C537.8 568.0 541.5 579.2 545 585 C548.5 590.8 551.2 592.8 557 597 C562.8 601.2 569.5 605.0 580 610 C590.5 615.0 606.3 622.2 620 627 C633.7 631.8 649.8 636.2 662 639 C674.2 641.8 681.7 642.7 693 643.5 C704.3 644.3 717.7 644.6 730 644 C742.3 643.4 753.2 642.8 767 640 C780.8 637.2 798.7 633.2 813 627 C827.3 620.8 840.7 611.3 853 603 C865.3 594.7 877.0 586.3 887 577 C897.0 567.7 905.3 557.0 913 547 C920.7 537.0 927.3 527.7 933 517 C938.7 506.3 943.3 495.3 947 483 C950.7 470.7 953.2 458.0 955 443 C956.8 428.0 957.2 404.0 958 393 C958.8 382.0 959.5 381.5 960 377 C960.5 372.5 960.8 367.8 961 366 A126.7 73.5 0 0 0 707.6 366 Z" fill="#434343"/>
<g clip-path="url(#bc)">
<path d="M712 380 L700 330 L600 330 L500 450 L500 502 L538 497 C555 503 588 500 610 486 C630 472 640 454 652 438 C666 420 684 406 698 388 Z" fill="url(#lg1)" filter="url(#bl1)"/>
<path d="M810 430 L813 300 L1000 300 L1000 520 L870 640 C856 600 845 580 833 555 C820 525 813 480 810 430 Z" fill="url(#lg2)" filter="url(#bl2)"/>
</g>
<ellipse cx="834.3" cy="367.8" rx="126.7" ry="73.5" fill="#00bec4"/>
<ellipse cx="834.3" cy="367.8" rx="126.7" ry="73.5" fill="none" stroke="#0a7f8a" stroke-width="1.2"/>
<ellipse cx="834.3" cy="367.8" rx="126.7" ry="73.5" fill="none" stroke="#30f0f0" stroke-width="1.2" stroke-dasharray="2 2"/>
<ellipse cx="834" cy="326" rx="127" ry="73" fill="none" stroke="#a09494" stroke-width="1"/>
</svg>
<!-- ansys logo -->
<svg style="left:1110px;top:180px" width="130" height="45" viewBox="1110 180 130 45"><path d="M1128.4 185.3 L1137 185.3 L1148.2 212 L1138.6 212 L1132.6 196.5 L1126.4 212 L1117.6 212 Z" fill="#fff"/></svg>
<div class="t" style="left:1148px;top:180px;color:#fff;font-weight:bold;font-size:37px;line-height:40px;letter-spacing:-1.4px">nsys</div>
<div class="t" style="left:1159px;top:220px;color:#fff;font-weight:bold;font-size:19px;line-height:20px;letter-spacing:-0.7px">2024 R1</div>
<!-- scale bar -->
<div class="t" style="left:677px;top:784px;font-size:12px;letter-spacing:0">0.00</div>
<div class="t" style="left:757px;top:784px;font-size:12px;letter-spacing:0">50.00</div>
<div class="t" style="left:839px;top:784px;font-size:12px;letter-spacing:0.3px">100.00 (mm)</div>
<div class="a" style="left:689px;top:798px;width:170px;height:13px;border:1px solid #000;background:#fff"></div>
<div class="a" style="left:689px;top:798px;width:43px;height:13px;background:#000"></div>
<div class="a" style="left:773px;top:798px;width:44px;height:13px;background:#000"></div>
<div class="t" style="left:715px;top:817px;font-size:12px;letter-spacing:0">25.00</div>
<div class="t" style="left:801px;top:817px;font-size:12px;letter-spacing:0">75.00</div>
<!-- triad -->
<svg style="left:1100px;top:705px" width="110" height="105" viewBox="1100 705 110 105">
<path d="M1150 772 V742" stroke="#006000" stroke-width="4.5"/>
<path d="M1150 731 L1156.5 743.5 L1143.5 743.5 Z" fill="#007000"/>
<path d="M1150 777 L1118 795" stroke="#0000c8" stroke-width="4.5"/>
<path d="M1110.5 799.5 L1117 789 L1124 798 Z" fill="#0000c0"/>
<path d="M1150 777 L1182 795" stroke="#a00000" stroke-width="4.5"/>
<path d="M1190 799.5 L1176 798 L1183 789 Z" fill="#a00000"/>
<circle cx="1150" cy="777" r="6" fill="#20c8d0"/>
<circle cx="1149" cy="775.5" r="2.5" fill="#70f0f0"/>
<path d="M1150.5 713 L1154.5 718 L1159 713 M1154.5 718 V723" fill="none" stroke="#00b000" stroke-width="1"/>
<path d="M1105 793.5 H1110 L1104.5 802.5 H1110.5" fill="none" stroke="#0000ff" stroke-width="1"/>
<path d="M1196 793.5 L1204 802.5 M1204 793.5 L1196 802.5" fill="none" stroke="#ff0000" stroke-width="1"/>
</svg>

<!-- STATUS BAR -->
<div class="a" style="left:1px;top:876px;width:1234px;height:1px;background:#fff"></div>
<div class="sp" style="left:3px;top:879px;width:739px;height:18px"></div>
<svg style="left:15px;top:879px" width="13" height="18"><path d="M2.5 1 H11 L8 6.5 H10.5 L6.5 10.5 H11 L3.2 17 L5 11.5 H2.5 L4.5 7.5 H1 Z" fill="#ffff00" stroke="#808000" stroke-width="0.4"/></svg>
<div class="t" style="left:41px;top:882px">Extrude Creation -- Select direction vector</div>
<div class="sp" style="left:744px;top:879px;width:281px;height:18px"></div>
<div class="t" style="left:746px;top:882px">No Selection</div>
<div class="sp" style="left:1027px;top:879px;width:121px;height:18px"></div>
<div class="t" style="left:1029px;top:882px">Millimeter   Degree</div>
<div class="sp" style="left:1150px;top:879px;width:34px;height:18px"></div>
<div class="t" style="left:1152px;top:882px">0</div>
<div class="sp" style="left:1187px;top:879px;width:35px;height:18px"></div>
<div class="t" style="left:1189px;top:882px">0</div>
<svg style="left:1220px;top:882px" width="15" height="15"><path d="M14 1 L1 14 M14 5 L5 14 M14 9 L9 14" stroke="#fff"/><path d="M14 2 L2 14 M14 3 L3 14 M14 6 L6 14 M14 7 L7 14 M14 10 L10 14 M14 11 L11 14" stroke="#808080"/></svg>
<div class="a" style="left:0;top:899px;width:1239px;height:1px;background:#808080"></div>

</body></html>
